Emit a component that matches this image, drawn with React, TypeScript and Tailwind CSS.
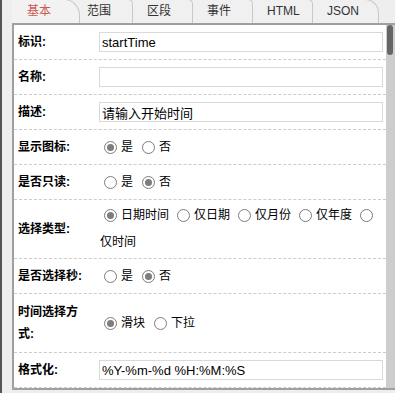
import React from "react";

const Radio = ({ checked }: { checked?: boolean }) => (
  <span className="ml-[5px] inline-flex h-[13px] w-[13px] shrink-0 items-center justify-center rounded-full border border-[#7d7d7d] bg-white">
    {checked && <span className="h-[7px] w-[7px] rounded-full bg-[#7d7d7d]" />}
  </span>
);

const Opt = ({ label, checked }: { label: string; checked?: boolean }) => (
  <span className="flex items-center">
    <Radio checked={checked} />
    <span className="ml-[4px] mr-[3px]">{label}</span>
  </span>
);

const Row = ({ label, tall, children }: { label: string; tall?: boolean; children: React.ReactNode }) => (
  <div className={tall ? "flex h-[59px] border-b border-dashed border-[#cccccc]" : "flex h-[35px] border-b border-dashed border-[#cccccc]"}>
    <div className="flex w-[79px] shrink-0 items-center pl-[4px] pr-[6px] text-[12px] font-bold leading-[22px] text-black">
      {label}
    </div>
    <div className="flex min-w-0 flex-1 items-center pl-[6px] pr-[3px] text-[12px] text-black">{children}</div>
  </div>
);

const Field = ({ value }: { value: string }) => (
  <input
    readOnly
    value={value}
    className="h-[20px] w-full border border-[#d9d9d9] bg-white px-[2px] text-[13px] text-black outline-none"
  />
);

const tabs = ["基本", "范围", "区段", "事件", "HTML", "JSON"];

export default function App() {
  return (
    <div className="flex h-[393px] w-[395px] overflow-hidden bg-[#eeeeee] font-['Liberation_Sans','Noto_Sans_CJK_SC',sans-serif]">
      <div className="w-[2px] shrink-0 bg-[#555555]" />
      <div className="ml-[10px] flex min-w-0 flex-1 flex-col">
        <div className="-mt-[1px] flex h-[24px] shrink-0">
          {tabs.map((t, i) => {
            if (i === 0)
              return (
                <div
                  key={t}
                  className="relative z-10 -mr-[7px] h-full w-[68px] shrink-0 rounded-tr-[16px] border-r border-t border-[#c8c8c8] bg-[#f2f2f2] pl-[15px] pt-[1px] text-[12px] leading-[20px] text-[#cf5a52]"
                >
                  {t}
                </div>
              );
            if (i === tabs.length - 1)
              return (
                <div
                  key={t}
                  className="h-full w-[66px] shrink-0 rounded-tr-[14px] border-r border-t border-[#c8c8c8] bg-[#f0f0f0] pl-[14px] pt-[1px] text-[12px] leading-[20px] text-[#333333]"
                >
                  {t}
                </div>
              );
            return (
              <div
                key={t}
                className="h-full w-[60px] shrink-0 rounded-tr-[5px] border-r border-t border-[#c8c8c8] bg-[#f0f0f0] pl-[14px] pt-[1px] text-[12px] leading-[20px] text-[#333333]"
              >
                {t}
              </div>
            );
          })}
        </div>
        <div className="flex shrink-0 border-b-2 border-l-2 border-t-2 border-[#a0a0a0] bg-white">
          <div className="min-w-0 flex-1">
            <Row label="标识:">
              <Field value="startTime" />
            </Row>
            <Row label="名称:">
              <Field value="" />
            </Row>
            <Row label="描述:">
              <Field value="请输入开始时间" />
            </Row>
            <Row label="显示图标:">
              <div className="flex items-center">
                <Opt label="是" checked />
                <span className="ml-[1px]" />
                <Opt label="否" />
              </div>
            </Row>
            <Row label="是否只读:">
              <div className="flex items-center">
                <Opt label="是" />
                <span className="ml-[1px]" />
                <Opt label="否" checked />
              </div>
            </Row>
            <Row label="选择类型:" tall>
              <div className="flex flex-col leading-[27px]">
                <div className="flex items-center">
                  <Opt label="日期时间" checked />
                  <Opt label="仅日期" />
                  <Opt label="仅月份" />
                  <Opt label="仅年度" />
                  <Radio />
                </div>
                <div className="pl-[1px]">仅时间</div>
              </div>
            </Row>
            <Row label="是否选择秒:">
              <div className="flex items-center">
                <Opt label="是" />
                <span className="ml-[1px]" />
                <Opt label="否" checked />
              </div>
            </Row>
            <Row label="时间选择方式:" tall>
              <div className="flex items-center">
                <Opt label="滑块" checked />
                <span className="ml-[1px]" />
                <Opt label="下拉" />
              </div>
            </Row>
            <Row label="格式化:">
              <Field value="%Y-%m-%d %H:%M:%S" />
            </Row>
          </div>
          <div className="w-[9px] shrink-0 bg-[#cdcdcd] pl-[1px]">
            <div className="h-[30px] w-[6px] rounded-[3px] bg-[#666666]" />
          </div>
        </div>
      </div>
    </div>
  );
}
